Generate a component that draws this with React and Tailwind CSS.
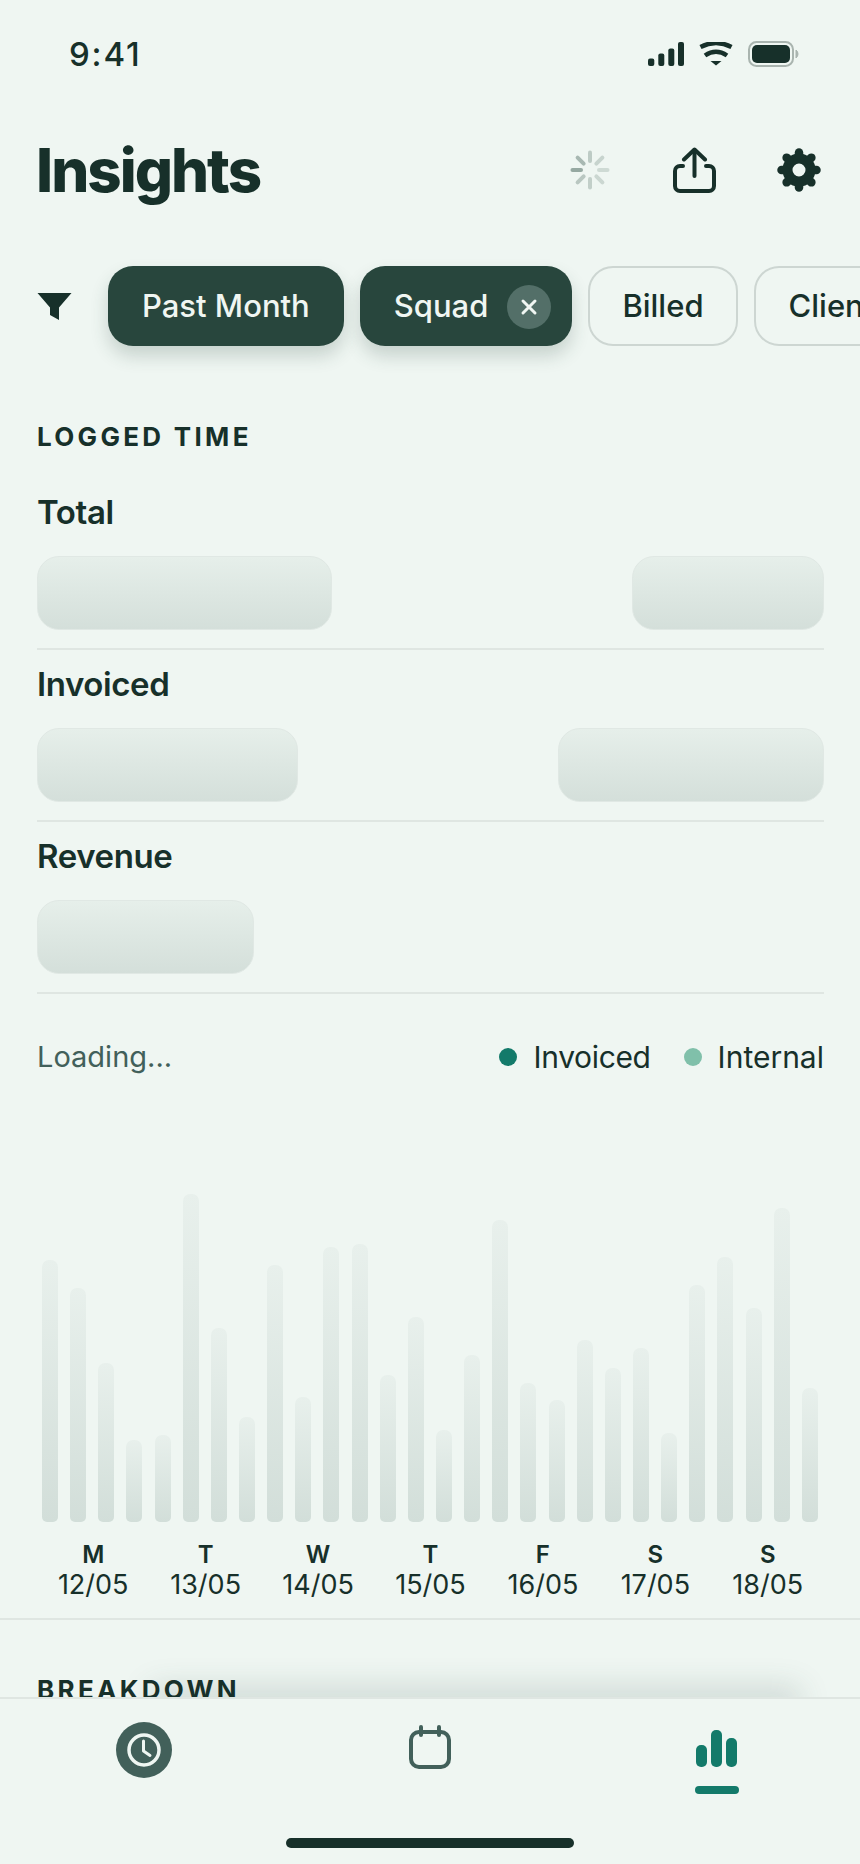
import React from "react";

const tops = [1260,1288,1363,1440,1435,1194,1328,1417,1265,1397,1247,1244,1375,1317,1430,1355,1220,1383,1400,1340,1368,1348,1433,1285,1257,1308,1208,1388];
const days = [["M","12/05"],["T","13/05"],["W","14/05"],["T","15/05"],["F","16/05"],["S","17/05"],["S","18/05"]];
const BOTTOM = 1522;

function Signal() {
  return (
    <svg width="36" height="24" viewBox="0 0 36 24" fill="#17302a">
      <rect x="0" y="16.5" width="6.3" height="7.5" rx="2" />
      <rect x="10.3" y="11.5" width="6" height="12.5" rx="2" />
      <rect x="20.3" y="6.5" width="6" height="17.5" rx="2" />
      <rect x="30" y="0" width="6" height="24" rx="2" />
    </svg>
  );
}
function Wifi() {
  return (
    <svg width="34" height="24" viewBox="0 0 34 24" fill="none" stroke="#17302a" strokeWidth="4.5">
      <path d="M1.5 5Q17 -3 32.5 5" />
      <path d="M6 13.5Q17 6 28 13.5" />
      <path d="M11.5 19H22.5L17 23.5Z" fill="#17302a" stroke="none" />
    </svg>
  );
}
function Battery() {
  return (
    <svg width="52" height="26" viewBox="0 0 52 26">
      <rect x="1" y="1" width="44" height="24" rx="7.5" fill="none" stroke="#a9b4af" strokeWidth="2" />
      <rect x="4" y="4" width="38" height="18" rx="5" fill="#17302a" />
      <path d="M48 9a5 5 0 0 1 0 8Z" fill="#a9b4af" stroke="#a9b4af" />
    </svg>
  );
}
function Spinner() {
  const op = [0.5, 0.4, 0.28, 0.22, 0.18, 0.2, 0.25, 0.3];
  return (
    <svg width="40" height="40" viewBox="-20 -20 40 40" stroke="#3f5e54" strokeWidth="4" strokeLinecap="round">
      {[0,45,90,135,180,225,270,315].map((a, i) => (
        <line key={a} x1="-9" y1="0" x2="-17.5" y2="0" transform={`rotate(${a})`} opacity={op[i]} />
      ))}
    </svg>
  );
}
function Share() {
  return (
    <svg width="43" height="46" viewBox="0 0 43 46" fill="none" stroke="#17302a" strokeWidth="4" strokeLinecap="round" strokeLinejoin="round">
      <path d="M10 19H7a5 5 0 0 0-5 5V39a5 5 0 0 0 5 5H36a5 5 0 0 0 5-5V24a5 5 0 0 0-5-5H33" />
      <path d="M21.5 29V3" />
      <path d="M11 12.5L21.5 2.5L32 12.5" />
    </svg>
  );
}
function Gear() {
  return (
    <svg width="44" height="44" viewBox="-22 -22 44 44" fill="none" stroke="#17302a">
      <circle r="11.5" strokeWidth="10" />
      {[0,45,90,135,180,225,270,315].map((a) => (
        <line key={a} x1="0" y1="-14" x2="0" y2="-17.5" strokeWidth="8.5" strokeLinecap="round" transform={`rotate(${a})`} />
      ))}
    </svg>
  );
}
function Funnel() {
  return (
    <svg width="35" height="27" viewBox="0 0 35 27" fill="#17302a">
      <path d="M0.5 0H34.5L22 14.5V27L13 22V14.5Z" />
    </svg>
  );
}
function Skeleton({ w }) {
  return <div className={`h-[74px] ${w} rounded-[22px] border border-[#e0e8e4] bg-gradient-to-b from-[#e6efea] to-[#d4dfda]`} />;
}
function Row({ title, left, right }) {
  return (
    <div className="border-b-2 border-[#dfe6e2] pt-[14px] pb-[18px]">
      <div className="text-[33px] leading-[40px] font-semibold tracking-[-0.4px] text-[#17302a]">{title}</div>
      <div className="mt-[24px] flex justify-between">
        {left}
        {right}
      </div>
    </div>
  );
}
function Chip({ children, active, className = "" }) {
  return (
    <div
      className={
        "flex h-[80px] shrink-0 items-center rounded-[25px] pt-[1px] text-[31px] font-medium " +
        (active
          ? "bg-[#28463d] text-[#f0f6f2] shadow-[0_10px_18px_rgba(42,70,61,0.2)] "
          : "border-2 border-[#cdd6d2] text-[#17302a] ") +
        className
      }
    >
      {children}
    </div>
  );
}

export default function App() {
  return (
    <div className="flex h-[1864px] w-[860px] flex-col overflow-hidden bg-[#eff6f2] font-['Inter',sans-serif] text-[#17302a]">
      <main className="relative min-h-0 flex-1 overflow-hidden">
        <div className="flex h-[108px] items-center justify-between pl-[69px] pr-[60px]">
          <span className="text-[33px] font-medium leading-none tracking-[1.8px]">9:41</span>
          <div className="flex items-center gap-[15px]">
            <Signal />
            <Wifi />
            <Battery />
          </div>
        </div>

        <div className="flex h-[124px] items-center justify-between pl-[36px] pr-[39px]">
          <h1 className="text-[60px] font-extrabold leading-none tracking-[-2px]">Insights</h1>
          <div className="flex items-center">
            <Spinner />
            <div className="ml-[63px]"><Share /></div>
            <div className="ml-[61px]"><Gear /></div>
          </div>
        </div>

        <div className="mt-[34px] flex items-center pl-[37px]">
          <div className="mr-[36px] shrink-0"><Funnel /></div>
          <div className="flex gap-[16px]">
            <Chip active className="px-[34px]">Past Month</Chip>
            <Chip active className="pl-[34px] pr-[21px]">
              Squad
              <span className="ml-[19px] flex h-[44px] w-[44px] items-center justify-center rounded-full bg-[#536f68]">
                <svg width="18" height="18" viewBox="0 0 18 18" stroke="#f0f6f2" strokeWidth="3" strokeLinecap="round"><path d="M3 3L15 15M15 3L3 15" /></svg>
              </span>
            </Chip>
            <Chip className="px-[32px]">Billed</Chip>
            <Chip className="px-[33px]">Client</Chip>
          </div>
        </div>

        <div className="pl-[37px] pr-[36px]">
          <h2 className="mt-[75px] mb-[25px] text-[26px] font-bold leading-[32px] tracking-[3.3px]">LOGGED TIME</h2>
          <Row title="Total" left={<Skeleton w="w-[295px]" />} right={<Skeleton w="w-[192px]" />} />
          <Row title="Invoiced" left={<Skeleton w="w-[261px]" />} right={<Skeleton w="w-[266px]" />} />
          <Row title="Revenue" left={<Skeleton w="w-[217px]" />} />

          <div className="mt-[43px] flex h-[40px] items-center justify-between">
            <span className="text-[29px] text-[#42605a]">Loading...</span>
            <div className="flex items-center text-[30px]">
              <span className="mr-[17px] h-[18px] w-[18px] rounded-full bg-[#137a6a]" />
              <span className="tracking-[-0.35px]">Invoiced</span>
              <span className="ml-[33px] mr-[16px] h-[18px] w-[18px] rounded-full bg-[#80c0aa]" />
              <span>Internal</span>
            </div>
          </div>

          <div className="flex h-[445px] items-end justify-between pl-[5px] pr-[6px]">
            {tops.map((t, i) => (
              <div
                key={i}
                className="w-[16px] rounded-b-[5px] rounded-t-[7px] bg-gradient-to-b from-[#e8f0ec] to-[#d2ded9]"
                style={{ height: BOTTOM - t }}
              />
            ))}
          </div>

          <div className="mt-[18px] grid grid-cols-7 text-center">
            {days.map(([d, date]) => (
              <div key={date}>
                <div className="text-[24px] font-semibold leading-[30px]">{d}</div>
                <div className="text-[27px] leading-[30px]">{date}</div>
              </div>
            ))}
          </div>
        </div>

        <div className="mt-[18px] border-t-2 border-[#dfe6e2] pl-[37px]">
          <h2 className="relative z-10 mt-[54px] text-[26px] font-bold leading-[32px] tracking-[3.3px]">BREAKDOWN</h2>
        </div>

        <div className="absolute left-[160px] right-[70px] top-full h-[10px] shadow-[0_0_30px_10px_rgba(50,80,70,0.17)]" />
      </main>

      <nav className="relative h-[167px] shrink-0 border-t-2 border-[#dfe6e2] bg-[#eff6f2]">
        <div className="mt-[23px] grid grid-cols-3">
          <div className="flex justify-center pl-[2px]">
            <div className="flex h-[56px] w-[56px] items-center justify-center rounded-full bg-[#42605a]">
              <svg width="36" height="36" viewBox="0 0 36 36" fill="none" stroke="#eff6f2" strokeWidth="3.5" strokeLinecap="round" strokeLinejoin="round">
                <circle cx="18" cy="18" r="15" />
                <path d="M17.5 9V19L24 23.5" strokeWidth="3" />
              </svg>
            </div>
          </div>
          <div className="flex justify-center">
            <svg width="44" height="56" viewBox="0 0 44 56" fill="none" stroke="#42605a" strokeWidth="4" strokeLinecap="round">
              <rect x="3" y="10" width="38" height="35" rx="8" />
              <path d="M13 5V13M31 5V13" />
            </svg>
          </div>
          <div className="flex flex-col items-center">
            <svg width="44" height="56" viewBox="0 0 44 56" fill="#137a6a">
              <rect x="1" y="23" width="11" height="22" rx="5" />
              <rect x="16" y="8" width="11" height="37" rx="5" />
              <rect x="31" y="16" width="11" height="29" rx="5" />
            </svg>
            <div className="mt-[8px] h-[8px] w-[44px] rounded-[4px] bg-[#137a6a]" />
          </div>
        </div>
        <div className="mx-auto mt-[44px] h-[10px] w-[288px] rounded-full bg-[#17302a]" />
      </nav>
    </div>
  );
}
